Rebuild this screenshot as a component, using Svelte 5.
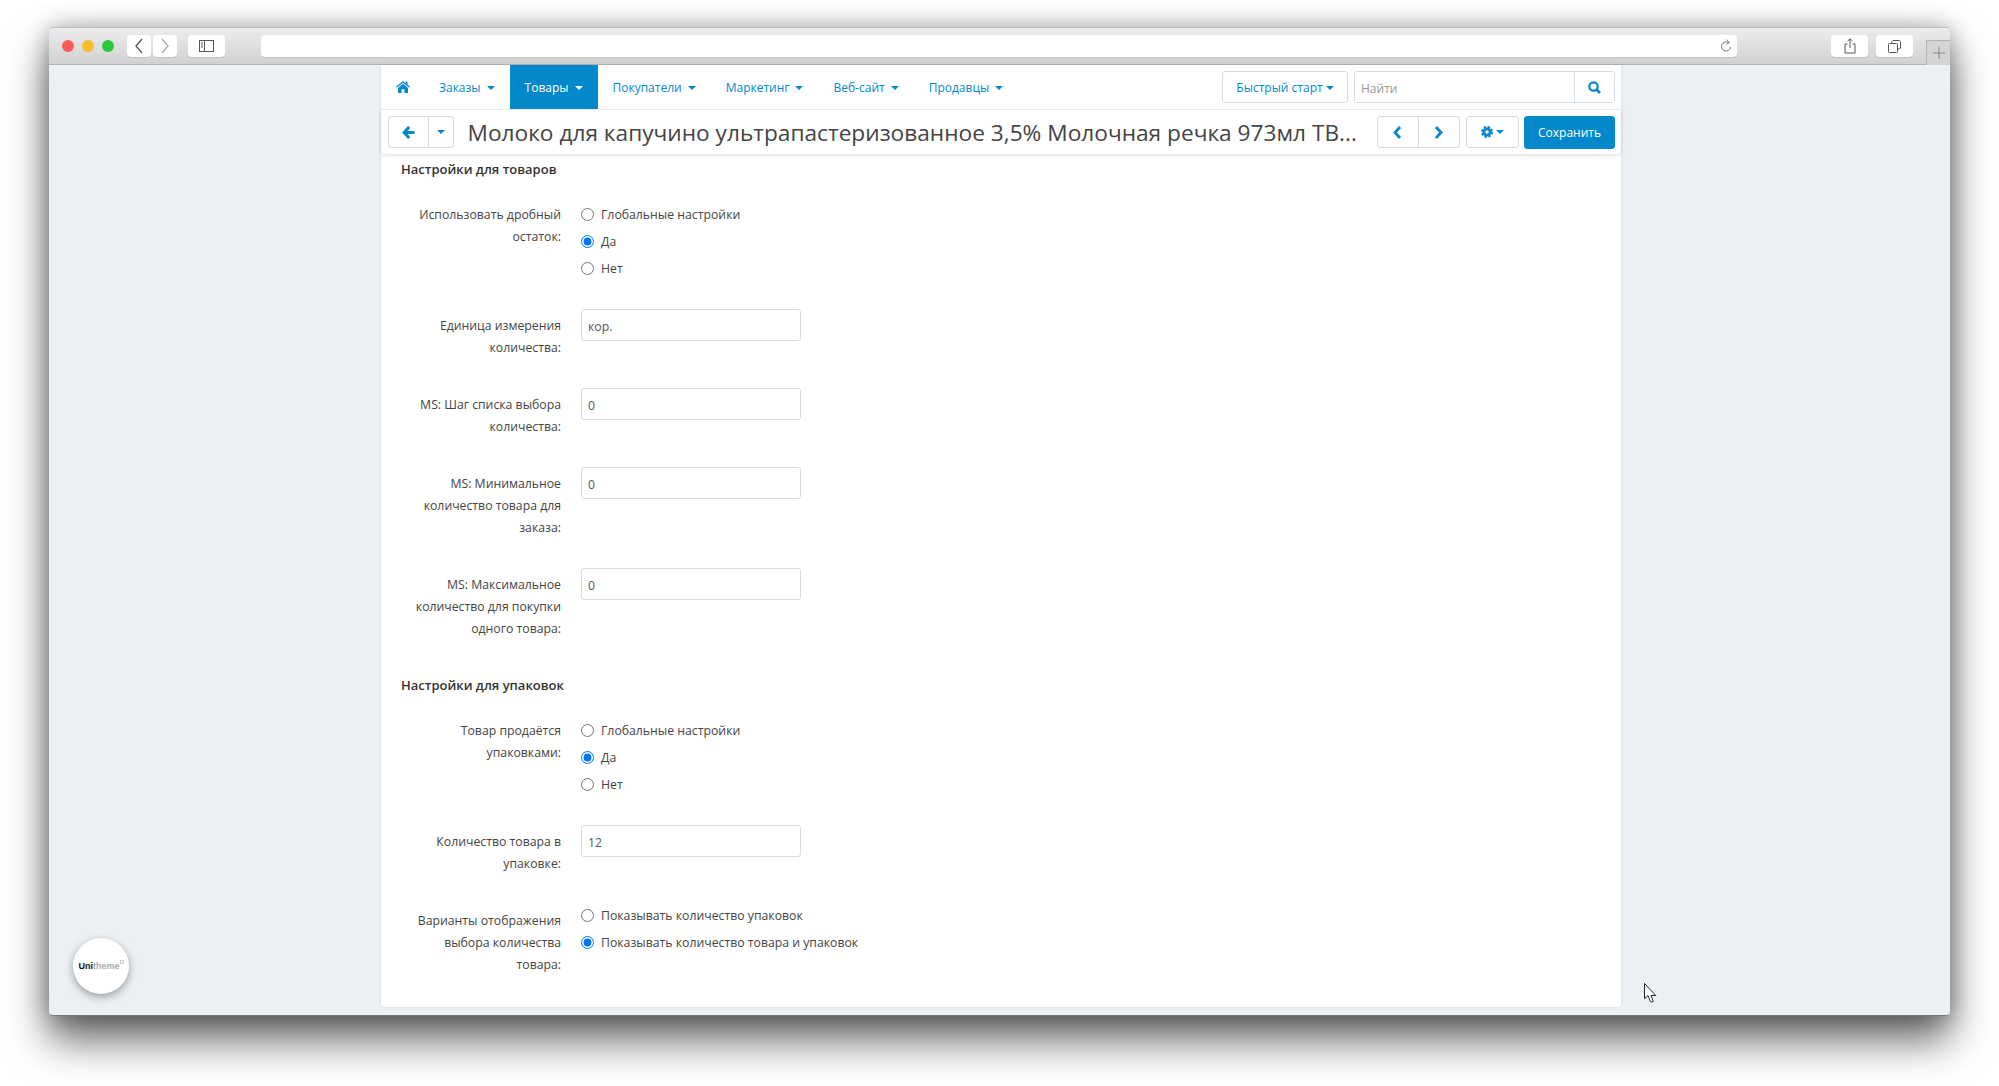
<script>
  const navItems = ['Заказы', 'Товары', 'Покупатели', 'Маркетинг', 'Веб-сайт', 'Продавцы'];

  const sections = [
    {
      title: 'Настройки для товаров',
      rows: [
        { label: 'Использовать дробный остаток:', radios: ['Глобальные настройки', 'Да', 'Нет'], checked: 1 },
        { label: 'Единица измерения количества:', value: 'кор.' },
        { label: 'MS: Шаг списка выбора количества:', value: '0' },
        { label: 'MS: Минимальное количество товара для заказа:', value: '0' },
        { label: 'MS: Максимальное количество для покупки одного товара:', value: '0' }
      ]
    },
    {
      title: 'Настройки для упаковок',
      rows: [
        { label: 'Товар продаётся упаковками:', radios: ['Глобальные настройки', 'Да', 'Нет'], checked: 1 },
        { label: 'Количество товара в упаковке:', value: '12' },
        {
          label: 'Варианты отображения выбора количества товара:',
          radios: ['Показывать количество упаковок', 'Показывать количество товара и упаковок'],
          checked: 1,
          raised: true
        }
      ]
    }
  ];
</script>

<div class="page">
  <div class="window">
    <!-- browser chrome -->
    <header class="chrome">
      <span class="light red"></span>
      <span class="light yellow"></span>
      <span class="light green"></span>
      <span class="cbtn back">
        <svg width="10" height="16" viewBox="0 0 10 16"><path d="M8 1 2 8l6 7" fill="none" stroke="#555" stroke-width="1.3" /></svg>
      </span>
      <span class="cbtn forward">
        <svg width="10" height="16" viewBox="0 0 10 16"><path d="m2 1 6 7-6 7" fill="none" stroke="#aaa" stroke-width="1.3" /></svg>
      </span>
      <span class="cbtn sidebar">
        <svg width="15" height="12" viewBox="0 0 15 12">
          <rect x=".5" y=".5" width="14" height="11" fill="none" stroke="#555" />
          <path d="M5.5 0v12M2 3h2M2 5h2M2 7h2" stroke="#555" fill="none" />
        </svg>
      </span>
      <span class="url">
        <svg width="12" height="14" viewBox="0 0 12 14">
          <path d="M8.6 3.6A4.6 4.6 0 1 0 10.6 8" fill="none" stroke="#777" />
          <path d="M6.5 .8 9.4 3.5 6.5 5.4" fill="none" stroke="#777" />
        </svg>
      </span>
      <span class="cbtn share">
        <svg width="12" height="16" viewBox="0 0 12 16">
          <path d="M3.5 6H1v9h10V6H8.500M6 10V1M3.500 3.200 6 .8l2.500 2.400" fill="none" stroke="#555" />
        </svg>
      </span>
      <span class="cbtn tabs">
        <svg width="13" height="13" viewBox="0 0 13 13">
          <path d="M4 3V1.500l1-1h6.500l1 1V8l-1 1H9.500" fill="none" stroke="#555" />
          <rect x=".5" y="3.500" width="9" height="9" rx="1" fill="none" stroke="#555" />
        </svg>
      </span>
      <span class="newtab">
        <svg width="12" height="12" viewBox="0 0 12 12"><path d="M6 0v12M0 6h12" stroke="#888" /></svg>
      </span>
    </header>

    <div class="content">
      <main class="panel">
        <!-- admin top menu -->
        <nav class="nav">
          <a class="nav-home" href="#home" aria-label="Главная">
            <svg width="14" height="12" viewBox="0 0 14 12">
              <path d="M7 0 0 5.800l.8 1L7 1.700l6.200 5.100.8-1L11.500 3.700V.6H9.700v1.600z" fill="#0388cc" />
              <path d="M7 2.800 2 7v5h3.600V8.300h2.800V12H12V7z" fill="#0388cc" />
            </svg>
          </a>
          {#each navItems as item, i}
            <a class="nav-item" class:active={i === 1} href="#item">{item}<span class="caret"></span></a>
          {/each}
          <div class="nav-right">
            <button class="btn quick">Быстрый старт<span class="caret tight"></span></button>
            <div class="search">
              <input type="text" placeholder="Найти" />
              <button aria-label="Найти">
                <svg width="13" height="13" viewBox="0 0 13 13">
                  <circle cx="5.500" cy="5.500" r="4.200" fill="none" stroke="#0388cc" stroke-width="2.200" />
                  <path d="m8.500 8.500 3.500 3.500" stroke="#0388cc" stroke-width="2.600" />
                </svg>
              </button>
            </div>
          </div>
        </nav>

        <!-- sticky title bar -->
        <div class="titlebar">
          <div class="group">
            <button class="btn g-back" aria-label="Назад">
              <svg width="13" height="13" viewBox="0 0 13 13">
                <path d="M7.200 1 2 6.500 7.200 12M2.500 6.500H12.500" fill="none" stroke="#0388cc" stroke-width="3" />
              </svg>
            </button>
            <button class="btn g-down" aria-label="Меню"><span class="caret flat"></span></button>
          </div>
          <h1>Молоко для капучино ультрапастеризованное 3,5% Молочная речка 973мл ТВ...</h1>
          <div class="group">
            <button class="btn g-nav" aria-label="Предыдущий">
              <svg width="9" height="13" viewBox="0 0 9 13"><path d="M7 1 2 6.500 7 12" fill="none" stroke="#0388cc" stroke-width="2.800" /></svg>
            </button>
            <button class="btn g-nav" aria-label="Следующий">
              <svg width="9" height="13" viewBox="0 0 9 13"><path d="m2 1 5 5.500L2 12" fill="none" stroke="#0388cc" stroke-width="2.800" /></svg>
            </button>
          </div>
          <button class="btn gear" aria-label="Настройки">
            <svg width="12" height="12" viewBox="0 0 12 12">
              <circle cx="6" cy="6" r="3.200" fill="none" stroke="#0388cc" stroke-width="2.800" />
              <circle cx="6" cy="6" r="5" fill="none" stroke="#0388cc" stroke-width="2" stroke-dasharray="2.300 1.630" />
            </svg>
            <span class="caret tight"></span>
          </button>
          <button class="btn save">Сохранить</button>
        </div>

        <!-- settings form -->
        <form class="form">
          {#each sections as section, s}
            <h4>{section.title}</h4>
            {#each section.rows as row, r}
              <div class="row">
                <div class="label">{row.label}</div>
                {#if row.radios}
                  <div class="radios" class:raised={row.raised}>
                    {#each row.radios as option, o}
                      <label class="radio">
                        <input type="radio" name={`opt-${s}-${r}`} checked={o === row.checked} />
                        {option}
                      </label>
                    {/each}
                  </div>
                {:else}
                  <input class="field" type="text" value={row.value} />
                {/if}
              </div>
            {/each}
          {/each}
        </form>
      </main>

      <!-- floating overlays -->
      <div class="badge"><b>Uni</b><span>theme</span><i></i></div>
      <svg class="cursor" width="13" height="20" viewBox="0 0 13 20">
        <path d="M.5.500v15.200l3.500-3.200 2.300 5.800q1.500 1.500 3 0l-2.300-5.800h4.800z" fill="#fff" stroke="#222" />
      </svg>
    </div>
  </div>
</div>

<style>
  :global(body) {
    margin: 0;
    background: #fff;
  }
  .page {
    width: 1999px;
    height: 1086px;
    box-sizing: border-box;
    padding: 27px 49px 70px 49px;
    overflow: hidden;
    font-family: 'Open Sans', 'Noto Sans', sans-serif;
    font-size: 12.25px;
    line-height: 22px;
    color: #444;
  }
  .window {
    height: 100%;
    display: flex;
    flex-direction: column;
    border-radius: 4px;
    box-shadow: 0 24px 42px rgba(0, 0, 0, 0.6), 0 0 24px rgba(0, 0, 0, 0.3);
  }

  /* browser chrome */
  .chrome {
    height: 38px;
    flex: none;
    box-sizing: border-box;
    display: flex;
    align-items: flex-start;
    padding-top: 7px;
    background: linear-gradient(#ececec, #d1d1d1);
    border-top: 1px solid #bdbdbd;
    border-bottom: 1px solid #b4b4b4;
    border-radius: 4px 4px 0 0;
  }
  .light {
    width: 12px;
    height: 12px;
    border-radius: 50%;
    margin-top: 5px;
    margin-right: 8px;
  }
  .red {
    margin-left: 13px;
    background: #fc5c57;
  }
  .yellow {
    background: #fdbb2e;
  }
  .green {
    background: #2ac940;
  }
  .cbtn {
    height: 22px;
    display: flex;
    align-items: center;
    justify-content: center;
    background: #fff;
    border-radius: 4px;
    box-shadow: 0 1px 0 #c4c4c4;
  }
  .back {
    width: 24px;
    margin-left: 5px;
  }
  .forward {
    width: 24px;
    margin-left: 2px;
  }
  .sidebar {
    width: 37px;
    margin-left: 11px;
  }
  .url {
    width: 1476px;
    height: 22px;
    margin-left: 36px;
    box-sizing: border-box;
    padding-right: 5px;
    display: flex;
    align-items: center;
    justify-content: flex-end;
    background: #fff;
    border-radius: 4px;
    box-shadow: 0 1px 0 #c4c4c4;
  }
  .share {
    width: 37px;
    margin-left: 94px;
  }
  .tabs {
    width: 37px;
    margin-left: 8px;
  }
  .newtab {
    width: 24px;
    height: 25px;
    margin-left: 13px;
    margin-top: 5px;
    box-sizing: border-box;
    display: flex;
    align-items: center;
    justify-content: center;
    background: #d4d4d4;
    border: 1px solid #b4b4b4;
    border-right: 0;
    border-bottom: 0;
  }

  .content {
    position: relative;
    flex: 1;
    min-height: 0;
    background: #ecf0f3;
    border-radius: 0 0 4px 4px;
    border-bottom: 1px solid #777;
  }
  .panel {
    width: 1240px;
    height: 942px;
    margin-left: 332px;
    background: #fff;
    border-radius: 0 0 4px 4px;
    box-shadow: 0 0 3px rgba(0, 0, 0, 0.1);
  }

  /* top menu */
  .nav {
    height: 45px;
    box-sizing: border-box;
    display: flex;
    font-size: 12px;
    border-bottom: 1px solid #f2f2f2;
  }
  .nav-home {
    width: 43px;
    height: 44px;
    display: flex;
    align-items: center;
    justify-content: center;
  }
  .nav-item {
    height: 44px;
    box-sizing: border-box;
    padding: 1px 15px 0;
    display: flex;
    align-items: center;
    color: #0388cc;
    text-decoration: none;
  }
  .nav-item.active {
    background: #0388cc;
    color: #fff;
  }
  .caret {
    width: 0;
    height: 0;
    margin-left: 6px;
    border-left: 4px solid transparent;
    border-right: 4px solid transparent;
    border-top: 4px solid currentColor;
  }
  .caret.tight {
    margin-left: 3px;
    color: #0388cc;
  }
  .caret.flat {
    margin: 0;
    color: #0388cc;
    display: block;
  }
  .nav-right {
    margin-left: auto;
    margin-right: 6px;
    padding-top: 6px;
    display: flex;
    gap: 6px;
  }

  .btn {
    height: 32px;
    box-sizing: border-box;
    padding: 0;
    display: flex;
    align-items: center;
    justify-content: center;
    background: #fff;
    border: 1px solid #d4dde5;
    border-radius: 3px;
    color: #0388cc;
    font: inherit;
  }
  .quick {
    width: 126px;
    padding-top: 1px;
  }
  .search {
    width: 261px;
    height: 32px;
    box-sizing: border-box;
    display: flex;
    border: 1px solid #d4dde5;
    border-radius: 3px;
  }
  .search input {
    flex: 1;
    min-width: 0;
    padding: 3px 6px 0;
    border: 0;
    outline: 0;
    font: inherit;
  }
  .search input::placeholder {
    color: #999;
  }
  .search button {
    width: 40px;
    padding: 0;
    display: flex;
    align-items: center;
    justify-content: center;
    background: #fff;
    border: 0;
    border-left: 1px solid #d4dde5;
  }

  /* title bar */
  .titlebar {
    position: relative;
    height: 44px;
    box-sizing: border-box;
    padding: 6px 6px 0 6.500px;
    display: flex;
    border-radius: 0 0 4px 4px;
    background: #fff;
    box-shadow: 0 1px 4px rgba(0, 0, 0, 0.14);
  }
  .group {
    display: flex;
  }
  .group .btn {
    border-radius: 0;
  }
  .group .btn:first-child {
    border-radius: 3px 0 0 3px;
  }
  .group .btn:last-child {
    border-radius: 0 3px 3px 0;
    border-left: 0;
  }
  .g-back {
    width: 41px;
  }
  .g-down {
    width: 25px;
  }
  .g-nav {
    width: 41.500px;
  }
  h1 {
    flex: 1;
    min-width: 0;
    margin: 1px 0 0;
    padding-left: 14px;
    font-size: 22.680px;
    font-weight: 400;
    line-height: 32px;
    color: #444;
    white-space: nowrap;
    overflow: hidden;
  }
  .gear {
    width: 53px;
    margin-left: 6px;
  }
  .save {
    width: 91px;
    height: 33px;
    margin-left: 5px;
    padding-top: 1px;
    background: #0388cc;
    border-color: #0388cc;
    color: #fff;
    font-size: 12px;
  }

  /* form */
  .form {
    padding-top: 4px;
  }
  h4 {
    margin: 0 0 18px;
    padding: 5px 0 0 20px;
    font-size: 13px;
    font-weight: 600;
    line-height: 22px;
    color: #333;
  }
  .form h4:first-child {
    padding-top: 0;
  }
  .row {
    display: flex;
    margin-bottom: 29px;
  }
  .label {
    width: 160px;
    margin-left: 20px;
    padding-top: 6px;
    text-align: right;
  }
  .radios {
    margin-left: 20px;
    margin-bottom: -2px;
    padding-top: 3px;
  }
  .radios.raised {
    margin-top: -5px;
    margin-bottom: 0;
  }
  .radio {
    height: 27px;
    display: flex;
    align-items: center;
  }
  .radio input {
    width: 13px;
    height: 13px;
    margin: 0 7px 0 0;
  }
  .field {
    width: 220px;
    height: 32px;
    margin-left: 20px;
    box-sizing: border-box;
    padding: 2px 6px 0;
    border: 1px solid #d4dde5;
    border-radius: 3px;
    color: #555;
    font: inherit;
    outline: 0;
  }

  /* overlays */
  .badge {
    position: absolute;
    left: 24px;
    top: 873px;
    width: 56px;
    height: 56px;
    display: flex;
    align-items: center;
    justify-content: center;
    background: #fff;
    border-radius: 50%;
    box-shadow: 0 3px 8px rgba(0, 0, 0, 0.35);
    font-family: 'Liberation Sans', sans-serif;
    font-size: 9px;
    font-weight: 700;
    color: #aaa;
  }
  .badge b {
    color: #111;
  }
  .badge i {
    width: 2px;
    height: 2px;
    margin: -9px 0 0 0;
    border: 1px solid #ccc;
  }
  .cursor {
    position: absolute;
    left: 1595px;
    top: 918px;
  }
</style>
